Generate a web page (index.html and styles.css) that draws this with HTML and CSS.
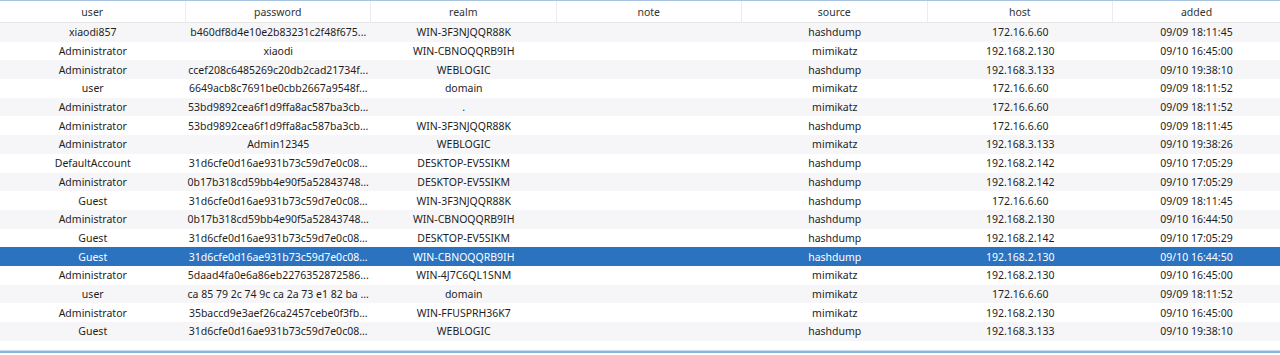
FILE: index.html
```html
<!DOCTYPE html>
<html>
<head>
<meta charset="utf-8">
<link rel="stylesheet" href="styles.css">
</head>
<body>
<div class="grid">
  <div class="row head">
    <div class="cell">user</div><div class="cell">password</div><div class="cell">realm</div><div class="cell">note</div><div class="cell">source</div><div class="cell">host</div><div class="cell">added</div>
  </div>
  <div class="row"><div class="cell">xiaodi857</div><div class="cell">b460df8d4e10e2b83231c2f48f675...</div><div class="cell">WIN-3F3NJQQR88K</div><div class="cell"></div><div class="cell">hashdump</div><div class="cell">172.16.6.60</div><div class="cell">09/09 18:11:45</div></div>
  <div class="row"><div class="cell">Administrator</div><div class="cell">xiaodi</div><div class="cell">WIN-CBNOQQRB9IH</div><div class="cell"></div><div class="cell">mimikatz</div><div class="cell">192.168.2.130</div><div class="cell">09/10 16:45:00</div></div>
  <div class="row"><div class="cell">Administrator</div><div class="cell">ccef208c6485269c20db2cad21734f...</div><div class="cell">WEBLOGIC</div><div class="cell"></div><div class="cell">hashdump</div><div class="cell">192.168.3.133</div><div class="cell">09/10 19:38:10</div></div>
  <div class="row"><div class="cell">user</div><div class="cell">6649acb8c7691be0cbb2667a9548f...</div><div class="cell">domain</div><div class="cell"></div><div class="cell">mimikatz</div><div class="cell">172.16.6.60</div><div class="cell">09/09 18:11:52</div></div>
  <div class="row"><div class="cell">Administrator</div><div class="cell">53bd9892cea6f1d9ffa8ac587ba3cb...</div><div class="cell">.</div><div class="cell"></div><div class="cell">mimikatz</div><div class="cell">172.16.6.60</div><div class="cell">09/09 18:11:52</div></div>
  <div class="row"><div class="cell">Administrator</div><div class="cell">53bd9892cea6f1d9ffa8ac587ba3cb...</div><div class="cell">WIN-3F3NJQQR88K</div><div class="cell"></div><div class="cell">hashdump</div><div class="cell">172.16.6.60</div><div class="cell">09/09 18:11:45</div></div>
  <div class="row"><div class="cell">Administrator</div><div class="cell">Admin12345</div><div class="cell">WEBLOGIC</div><div class="cell"></div><div class="cell">mimikatz</div><div class="cell">192.168.3.133</div><div class="cell">09/10 19:38:26</div></div>
  <div class="row"><div class="cell">DefaultAccount</div><div class="cell">31d6cfe0d16ae931b73c59d7e0c08...</div><div class="cell">DESKTOP-EV5SIKM</div><div class="cell"></div><div class="cell">hashdump</div><div class="cell">192.168.2.142</div><div class="cell">09/10 17:05:29</div></div>
  <div class="row"><div class="cell">Administrator</div><div class="cell">0b17b318cd59bb4e90f5a52843748...</div><div class="cell">DESKTOP-EV5SIKM</div><div class="cell"></div><div class="cell">hashdump</div><div class="cell">192.168.2.142</div><div class="cell">09/10 17:05:29</div></div>
  <div class="row"><div class="cell">Guest</div><div class="cell">31d6cfe0d16ae931b73c59d7e0c08...</div><div class="cell">WIN-3F3NJQQR88K</div><div class="cell"></div><div class="cell">hashdump</div><div class="cell">172.16.6.60</div><div class="cell">09/09 18:11:45</div></div>
  <div class="row"><div class="cell">Administrator</div><div class="cell">0b17b318cd59bb4e90f5a52843748...</div><div class="cell">WIN-CBNOQQRB9IH</div><div class="cell"></div><div class="cell">hashdump</div><div class="cell">192.168.2.130</div><div class="cell">09/10 16:44:50</div></div>
  <div class="row"><div class="cell">Guest</div><div class="cell">31d6cfe0d16ae931b73c59d7e0c08...</div><div class="cell">DESKTOP-EV5SIKM</div><div class="cell"></div><div class="cell">hashdump</div><div class="cell">192.168.2.142</div><div class="cell">09/10 17:05:29</div></div>
  <div class="row selected"><div class="cell">Guest</div><div class="cell">31d6cfe0d16ae931b73c59d7e0c08...</div><div class="cell">WIN-CBNOQQRB9IH</div><div class="cell"></div><div class="cell">hashdump</div><div class="cell">192.168.2.130</div><div class="cell">09/10 16:44:50</div></div>
  <div class="row"><div class="cell">Administrator</div><div class="cell">5daad4fa0e6a86eb2276352872586...</div><div class="cell">WIN-4J7C6QL1SNM</div><div class="cell"></div><div class="cell">mimikatz</div><div class="cell">192.168.2.130</div><div class="cell">09/10 16:45:00</div></div>
  <div class="row"><div class="cell">user</div><div class="cell">ca 85 79 2c 74 9c ca 2a 73 e1 82 ba ...</div><div class="cell">domain</div><div class="cell"></div><div class="cell">mimikatz</div><div class="cell">172.16.6.60</div><div class="cell">09/09 18:11:52</div></div>
  <div class="row"><div class="cell">Administrator</div><div class="cell">35baccd9e3aef26ca2457cebe0f3fb...</div><div class="cell">WIN-FFUSPRH36K7</div><div class="cell"></div><div class="cell">mimikatz</div><div class="cell">192.168.2.130</div><div class="cell">09/10 16:45:00</div></div>
  <div class="row"><div class="cell">Guest</div><div class="cell">31d6cfe0d16ae931b73c59d7e0c08...</div><div class="cell">WEBLOGIC</div><div class="cell"></div><div class="cell">hashdump</div><div class="cell">192.168.3.133</div><div class="cell">09/10 19:38:10</div></div>
</div>
</body>
</html>
```
FILE: styles.css
```css
html, body {
  margin: 0;
  padding: 0;
  background: #ffffff;
}
body {
  font-family: "Noto Sans", "Liberation Sans", sans-serif;
  font-size: 10.5px;
  color: #1e1e1e;
  height: 355px;
  overflow: hidden;
}
.grid {
  border-top: 1px solid #a9c4e0;
  height: 349px;
  border-bottom: 1px solid #c9dcef;
  box-shadow: 0 2px 0 #8fb4db;
  display: flex;
  flex-direction: column;
}
.row {
  display: grid;
  grid-template-columns: repeat(6, 185.5px) 1fr;
  height: 18.7px;
  align-items: center;
}
.row:nth-child(even) {
  background: #f6f6f8;
}
.row.head {
  height: 21px;
  background: #ffffff;
  color: #333333;
  border-bottom: 1px solid #e6e6e6;
}
.head .cell {
  height: 100%;
  display: flex;
  align-items: center;
  justify-content: center;
  border-right: 1px solid #ececec;
  box-sizing: border-box;
}
.head .cell:last-child {
  border-right: none;
}
.cell {
  text-align: center;
  white-space: nowrap;
  line-height: 18px;
}
.row.selected {
  background: #2b72bf;
  color: #ffffff;
}
```
